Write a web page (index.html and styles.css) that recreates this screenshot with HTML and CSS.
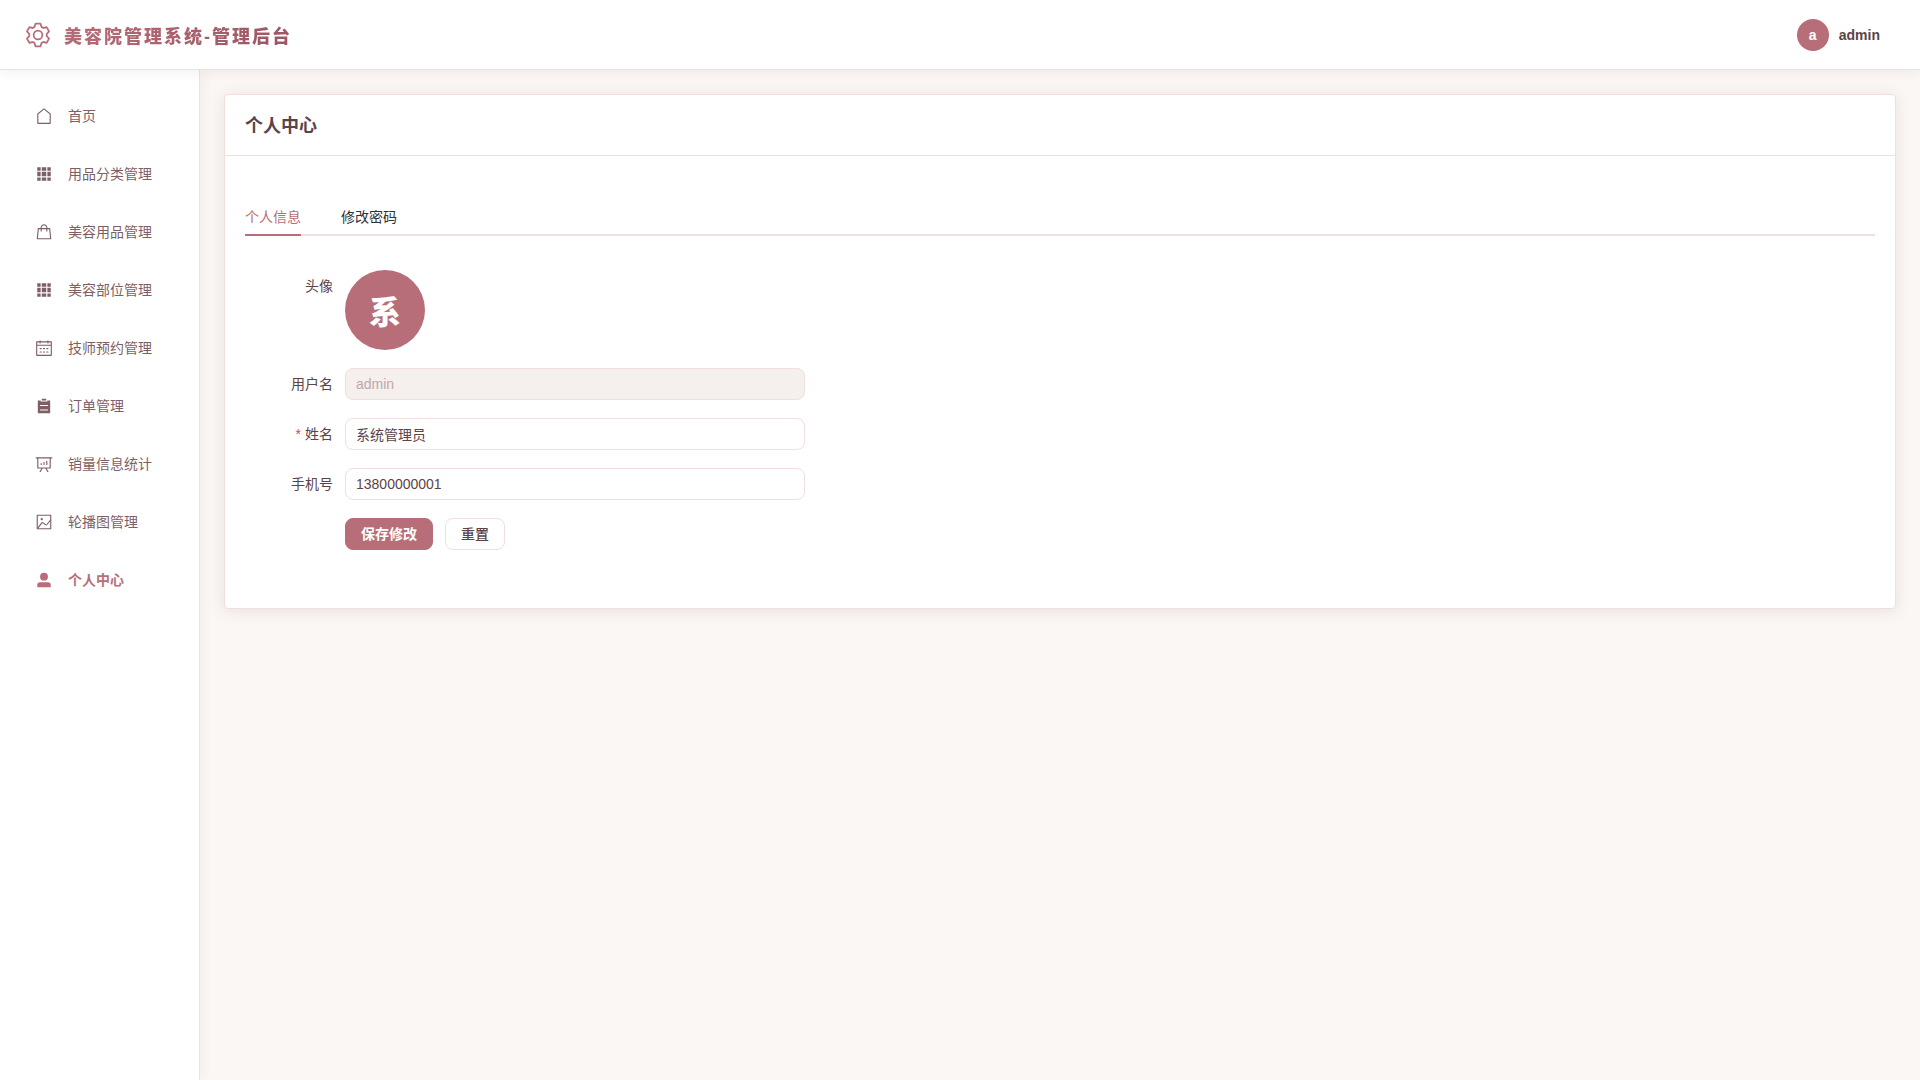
FILE: index.html
```html
<!DOCTYPE html>
<html lang="zh-CN">

<head>
  <meta charset="UTF-8">
  <meta name="viewport" content="width=device-width, initial-scale=1.0">
  <title>美容院管理系统-管理后台</title>
  <link rel="stylesheet" href="styles.css">
</head>

<body>
  <header class="header">
    <div class="logo">
      <svg class="logo-icon" viewBox="0 0 1024 1024"><path d="M600.704 64a32 32 0 0 1 30.464 22.208l35.2 109.376c14.784 7.232 28.928 15.36 42.432 24.512l112.384-24.192a32 32 0 0 1 34.432 15.36L944.32 364.8a32 32 0 0 1-4.032 37.504l-77.12 85.12a357.12 357.12 0 0 1 0 49.024l77.12 85.248a32 32 0 0 1 4.032 37.504l-88.704 153.6a32 32 0 0 1-34.432 15.296L708.8 803.904c-13.44 9.088-27.648 17.28-42.368 24.512l-35.264 109.376A32 32 0 0 1 600.704 960H423.296a32 32 0 0 1-30.464-22.208L357.696 828.48a351.616 351.616 0 0 1-42.56-24.64l-112.32 24.256a32 32 0 0 1-34.432-15.36L79.68 659.2a32 32 0 0 1 4.032-37.504l77.12-85.248a357.12 357.12 0 0 1 0-48.896l-77.12-85.248A32 32 0 0 1 79.68 364.8l88.704-153.6a32 32 0 0 1 34.432-15.296l112.32 24.256c13.568-9.152 27.776-17.408 42.56-24.64l35.2-109.312A32 32 0 0 1 423.232 64H600.64zm-23.424 64H446.72l-36.352 113.088-24.512 11.968a294.113 294.113 0 0 0-34.816 20.096l-22.656 15.36-116.224-25.088-65.28 113.152 79.68 88.192-1.92 27.136a293.12 293.12 0 0 0 0 40.192l1.92 27.136-79.808 88.192 65.344 113.152 116.224-25.024 22.656 15.296a294.113 294.113 0 0 0 34.816 20.096l24.512 11.968L446.72 896h130.688l36.48-113.152 24.448-11.904a288.282 288.282 0 0 0 34.752-20.096l22.592-15.296 116.288 25.024 65.28-113.152-79.744-88.192 1.92-27.136a293.12 293.12 0 0 0 0-40.256l-1.92-27.136 79.808-88.128-65.344-113.152-116.288 24.96-22.592-15.232a287.616 287.616 0 0 0-34.752-20.096l-24.448-11.904L577.344 128zM512 320a192 192 0 1 1 0 384 192 192 0 0 1 0-384zm0 64a128 128 0 1 0 0 256 128 128 0 0 0 0-256z"/></svg>
      <span class="logo-text">美容院管理系统-管理后台</span>
    </div>
    <div class="user-info">
      <span class="avatar">a</span>
      <span class="username">admin</span>
    </div>
  </header>

  <div class="container">
    <nav class="sidebar">
      <ul>
        <li><a href="#home">
          <svg viewBox="0 0 1024 1024"><path d="M192 413.952V896h640V413.952L512 147.328 192 413.952zM139.52 374.4l352-293.312a32 32 0 0 1 40.96 0l352 293.312A32 32 0 0 1 896 398.976V928a32 32 0 0 1-32 32H160a32 32 0 0 1-32-32V398.976a32 32 0 0 1 11.52-24.576z"/></svg>
          <span>首页</span>
        </a></li>
        <li><a href="#category">
          <svg viewBox="0 0 1024 1024"><path d="M640 384v256H384V384h256zm64 0h192v256H704V384zm-64 512H384V704h256v192zm64 0V704h192v192H704zm-64-768v192H384V128h256zm64 0h192v192H704V128zM320 384v256H128V384h192zm0 512H128V704h192v192zm0-768v192H128V128h192z"/></svg>
          <span>用品分类管理</span>
        </a></li>
        <li><a href="#goods">
          <svg viewBox="0 0 1024 1024"><path d="M320 288v-22.336C320 154.688 405.504 64 512 64s192 90.688 192 201.664v22.4h131.072a32 32 0 0 1 31.808 28.8l57.6 576a32 32 0 0 1-31.808 35.2H131.328a32 32 0 0 1-31.808-35.2l57.6-576a32 32 0 0 1 31.808-28.8H320zm64 0h256v-22.336C640 189.248 582.272 128 512 128c-70.272 0-128 61.248-128 137.664v22.4zm-64 64H217.92l-51.2 512h690.56l-51.264-512H704v96a32 32 0 1 1-64 0v-96H384v96a32 32 0 0 1-64 0v-96z"/></svg>
          <span>美容用品管理</span>
        </a></li>
        <li><a href="#part">
          <svg viewBox="0 0 1024 1024"><path d="M640 384v256H384V384h256zm64 0h192v256H704V384zm-64 512H384V704h256v192zm64 0V704h192v192H704zm-64-768v192H384V128h256zm64 0h192v192H704V128zM320 384v256H128V384h192zm0 512H128V704h192v192zm0-768v192H128V128h192z"/></svg>
          <span>美容部位管理</span>
        </a></li>
        <li><a href="#appointment">
          <svg viewBox="0 0 1024 1024"><path d="M128 384v512h768V192H768v32a32 32 0 1 1-64 0v-32H320v32a32 32 0 0 1-64 0v-32H128v128h768v64H128zm192-256h384V96a32 32 0 1 1 64 0v32h160a32 32 0 0 1 32 32v768a32 32 0 0 1-32 32H96a32 32 0 0 1-32-32V160a32 32 0 0 1 32-32h160V96a32 32 0 0 1 64 0v32zm-32 384h64a32 32 0 0 1 0 64h-64a32 32 0 0 1 0-64zm0 192h64a32 32 0 1 1 0 64h-64a32 32 0 1 1 0-64zm192-192h64a32 32 0 0 1 0 64h-64a32 32 0 0 1 0-64zm0 192h64a32 32 0 1 1 0 64h-64a32 32 0 1 1 0-64zm192-192h64a32 32 0 1 1 0 64h-64a32 32 0 1 1 0-64zm0 192h64a32 32 0 1 1 0 64h-64a32 32 0 1 1 0-64z"/></svg>
          <span>技师预约管理</span>
        </a></li>
        <li><a href="#order">
          <svg viewBox="0 0 1024 1024"><path d="M704 192h160v736H160V192h160v64h384v-64zM288 512h448v-64H288v64zm0 256h448v-64H288v64zm96-576V96h256v96H384z"/></svg>
          <span>订单管理</span>
        </a></li>
        <li><a href="#statistics">
          <svg viewBox="0 0 1024 1024"><path d="m665.216 768 110.848 192h-73.856L591.36 768H433.024L322.176 960H248.32l110.848-192H160a32 32 0 0 1-32-32V192H64a32 32 0 0 1 0-64h896a32 32 0 1 1 0 64h-64v544a32 32 0 0 1-32 32H665.216zM832 192H192v512h640V192zM352 448a32 32 0 0 1 32 32v64a32 32 0 0 1-64 0v-64a32 32 0 0 1 32-32zm160-64a32 32 0 0 1 32 32v128a32 32 0 0 1-64 0V416a32 32 0 0 1 32-32zm160-64a32 32 0 0 1 32 32v192a32 32 0 1 1-64 0V352a32 32 0 0 1 32-32z"/></svg>
          <span>销量信息统计</span>
        </a></li>
        <li><a href="#banner">
          <svg viewBox="0 0 1024 1024"><path d="M160 160v704h704V160H160zm-32-64h768a32 32 0 0 1 32 32v768a32 32 0 0 1-32 32H128a32 32 0 0 1-32-32V128a32 32 0 0 1 32-32z"/><path d="M384 288q64 0 64 64t-64 64q-64 0-64-64t64-64zM185.408 876.992l-50.816-38.912L350.72 556.032a96 96 0 0 1 134.592-17.856l1.856 1.472 122.88 99.136a32 32 0 0 0 44.992-4.864l216-269.888 49.92 39.936-215.808 269.824-.256.32a96 96 0 0 1-135.04 14.464l-122.88-99.072-.64-.512a32 32 0 0 0-44.8 5.952L185.408 876.992z"/></svg>
          <span>轮播图管理</span>
        </a></li>
        <li><a href="#profile" class="active">
          <svg viewBox="0 0 1024 1024"><path d="M288 320a224 224 0 1 0 448 0 224 224 0 1 0-448 0zm544 608H160a32 32 0 0 1-32-32v-96a160 160 0 0 1 160-160h448a160 160 0 0 1 160 160v96a32 32 0 0 1-32 32z"/></svg>
          <span>个人中心</span>
        </a></li>
      </ul>
    </nav>

    <main class="main">
      <section class="card">
        <h2 class="card-header">个人中心</h2>
        <div class="card-body">
          <div class="tabs">
            <a href="#info" class="tab active">个人信息</a>
            <a href="#password" class="tab">修改密码</a>
          </div>

          <form class="profile-form" id="profileForm">
            <div class="form-group">
              <span class="form-label">头像</span>
              <span class="avatar avatar-large">系</span>
            </div>
            <div class="form-group">
              <label class="form-label" for="username">用户名</label>
              <input type="text" id="username" name="username" value="admin" disabled>
            </div>
            <div class="form-group">
              <label class="form-label required" for="realName">姓名</label>
              <input type="text" id="realName" name="realName" value="系统管理员" required>
            </div>
            <div class="form-group">
              <label class="form-label" for="phone">手机号</label>
              <input type="text" id="phone" name="phone" value="13800000001">
            </div>
            <div class="form-actions">
              <button type="submit" class="btn btn-primary">保存修改</button>
              <button type="reset" class="btn">重置</button>
            </div>
          </form>
        </div>
      </section>
    </main>
  </div>
</body>

</html>
```
FILE: styles.css
```css
* {
  box-sizing: border-box;
}

body {
  margin: 0;
  min-height: 100vh;
  display: flex;
  flex-direction: column;
  font-family: "Liberation Sans", "Noto Sans CJK SC", sans-serif;
  font-size: 14px;
  color: #5c4348;
  background-color: #fbf7f4;
}

a {
  color: inherit;
  text-decoration: none;
}

.header {
  position: relative;
  z-index: 2;
  display: flex;
  align-items: center;
  justify-content: space-between;
  height: 70px;
  padding: 0 40px 0 24px;
  background-color: #fff;
  border-bottom: 1px solid #f0dfdc;
  box-shadow: 0 2px 12px rgba(92, 67, 72, 0.08);
}

.logo,
.user-info {
  display: flex;
  align-items: center;
}

.logo {
  gap: 12px;
}

.logo-icon {
  width: 28px;
  height: 28px;
  fill: #b76e79;
}

.logo-text {
  font-size: 18px;
  font-weight: 900;
  letter-spacing: 2px;
  color: transparent;
  background: linear-gradient(135deg, #b76e79, #9b5562);
  background-clip: text;
}

.user-info {
  gap: 10px;
}

.username {
  font-weight: bold;
}

.avatar {
  display: flex;
  align-items: center;
  justify-content: center;
  width: 32px;
  height: 32px;
  border-radius: 50%;
  background-color: #b76e79;
  color: #fff;
  font-weight: 900;
}

.avatar-large {
  width: 80px;
  height: 80px;
  font-size: 32px;
}

.container {
  flex: 1;
  display: flex;
}

.sidebar {
  width: 200px;
  padding: 20px 0;
  background-color: #fff;
  border-right: 1px solid #f0dfdc;
  box-shadow: 2px 0 12px rgba(92, 67, 72, 0.06);
}

.sidebar ul {
  display: flex;
  flex-direction: column;
  gap: 8px;
  margin: 0;
  padding: 0;
  list-style: none;
}

.sidebar a {
  display: flex;
  align-items: center;
  gap: 15px;
  height: 50px;
  padding-left: 35px;
  color: #7d5f65;
}

.sidebar svg {
  width: 18px;
  height: 18px;
  margin-top: 2px;
  fill: currentColor;
}

.sidebar a.active {
  color: #b76e79;
  font-weight: bold;
}

.main {
  flex: 1;
  padding: 24px;
}

.card {
  background-color: #fff;
  border: 1px solid #f0dfdc;
  border-radius: 4px;
  box-shadow: 0 2px 16px rgba(92, 67, 72, 0.12);
}

.card-header {
  margin: 0;
  padding: 19px 20px 17px;
  border-bottom: 1px solid #f0dfdc;
  font-size: 18px;
  line-height: 24px;
}

.card-body {
  padding: 40px 20px 58px;
}

.tabs {
  display: flex;
  gap: 40px;
  margin-bottom: 34px;
  border-bottom: 2px solid #f0dfdc;
}

.tab {
  height: 40px;
  margin-bottom: -2px;
  border-bottom: 2px solid transparent;
  color: #303133;
  line-height: 42px;
}

.tab.active {
  color: #b76e79;
  border-bottom-color: #b76e79;
}

.profile-form {
  display: flex;
  flex-direction: column;
  gap: 18px;
  max-width: 560px;
}

.form-group {
  display: flex;
}

.form-label {
  width: 100px;
  padding-right: 12px;
  line-height: 32px;
  text-align: right;
}

.form-label.required::before {
  content: "*";
  margin-right: 4px;
  color: #e04848;
}

.form-group input {
  flex: 1;
  height: 32px;
  padding: 0 10px 1px;
  border: 1px solid #f0dfdc;
  border-radius: 8px;
  background-color: #fff;
  color: #5c4348;
  font-family: inherit;
  font-size: 14px;
}

.form-group input:disabled {
  background-color: #f5efed;
  color: #bfa8ac;
}

.form-actions {
  display: flex;
  gap: 12px;
  padding-left: 100px;
}

.btn {
  height: 32px;
  padding: 0 15px 2px;
  border: 1px solid #f0dfdc;
  border-radius: 8px;
  background-color: #fff;
  color: #5c4348;
  font-family: inherit;
  font-size: 14px;
  font-weight: 500;
  cursor: pointer;
}

.btn-primary {
  border-color: #b76e79;
  background-color: #b76e79;
  color: #fff;
  font-weight: bold;
}
```
